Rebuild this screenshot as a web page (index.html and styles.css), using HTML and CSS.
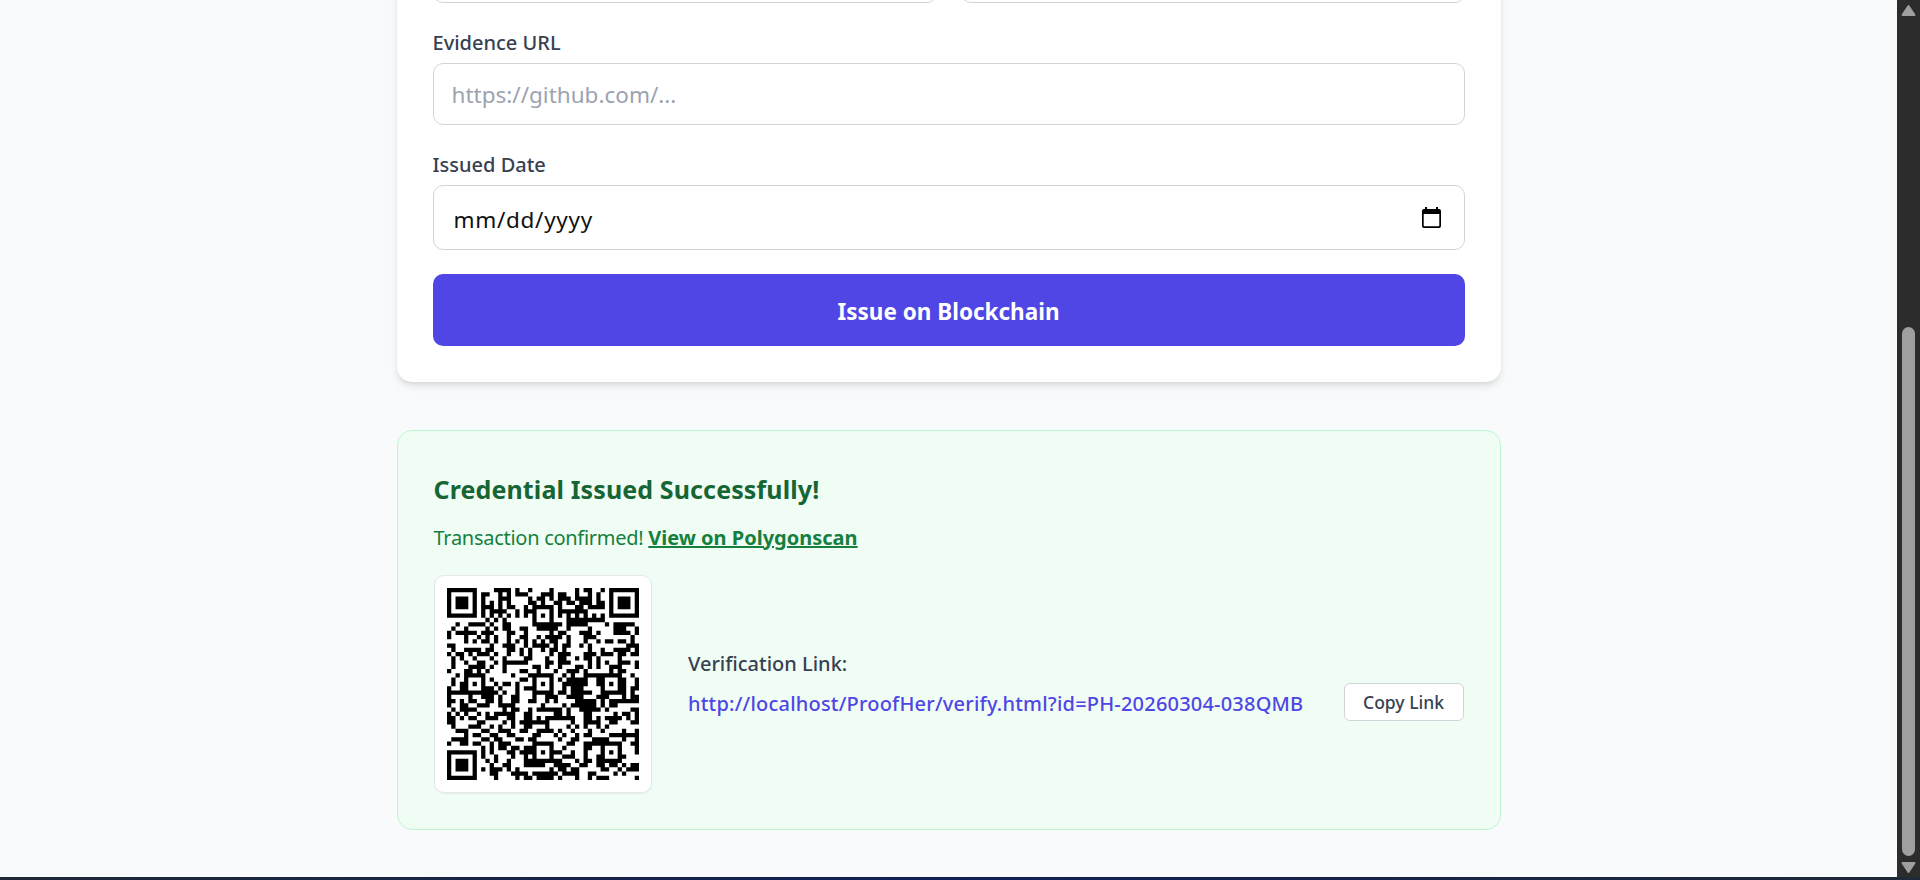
FILE: index.html
```html
<!DOCTYPE html>
<html lang="en">
<head>
  <meta charset="UTF-8">
  <title>ProofHer - Issue Credential</title>
  <link rel="stylesheet" href="styles.css">
</head>
<body>
  <div class="window">
    <div class="viewport">
      <div class="page">
        <main class="content">
          <form class="card">
            <div class="field-row">
              <input class="input" type="text">
              <input class="input" type="text">
            </div>
            <div class="field">
              <label class="label">Evidence URL</label>
              <input class="input" type="text" placeholder="https://github.com/...">
            </div>
            <div class="field">
              <label class="label">Issued Date</label>
              <div class="input date-input">
                <span class="date-text">mm/dd/yyyy</span>
                <svg class="cal-icon" viewBox="0 0 19 21">
                  <rect x="3" y="0" width="2" height="3"/>
                  <rect x="14" y="0" width="2" height="3"/>
                  <path fill-rule="evenodd" d="M2 2h15a2 2 0 0 1 2 2v15a2 2 0 0 1-2 2H2a2 2 0 0 1-2-2V4a2 2 0 0 1 2-2zm-.3 5v11.6c0 .4.3.7.7.7h14.2c.4 0 .7-.3.7-.7V7z"/>
                </svg>
              </div>
            </div>
            <button class="btn-primary" type="button">Issue on Blockchain</button>
          </form>

          <section class="success">
            <h3 class="success-title">Credential Issued Successfully!</h3>
            <p class="success-text">Transaction confirmed! <a href="#">View on Polygonscan</a></p>
            <div class="share-row">
              <div class="qr-box"><svg id="qr" class="qr"></svg></div>
              <div class="link-info">
                <div class="link-label">Verification Link:</div>
                <div class="link-row">
                  <a class="verify-link" href="#">http://localhost/ProofHer/verify.html?id=PH-20260304-038QMB</a>
                  <button class="btn-copy" type="button">Copy Link</button>
                </div>
              </div>
            </div>
          </section>
        </main>
      </div>
      <div class="scrollbar">
        <svg class="arrow" viewBox="0 0 23 17"><path d="M11.5 6 L17.5 15 H5.5 Z"/></svg>
        <div class="track"><div class="thumb"></div></div>
        <svg class="arrow" viewBox="0 0 23 21"><path d="M5.5 7 H17.5 L11.5 16 Z"/></svg>
      </div>
    </div>
    <div class="footer-strip"></div>
  </div>
  <script src="qr.js"></script>
</body>
</html>
```

FILE: styles.css
```css
* { box-sizing: border-box; }
html, body {
  margin: 0;
  height: 100%;
  overflow: hidden;
}
body {
  font-family: "Noto Sans", "Open Sans", Arial, sans-serif;
  background-color: #f9fafb;
  color: #374151;
}
.window {
  display: flex;
  flex-direction: column;
  height: 880px;
}
.viewport {
  flex: 1;
  display: flex;
  min-height: 0;
}
.page {
  flex: 1;
  overflow: hidden;
}
.content {
  width: 1104px;
  margin: 0 auto;
}
.card {
  /* page is scrolled, top of the form is out of view */
  margin-top: -100px;
  padding: 36px;
  background: #fff;
  border-radius: 15px;
  box-shadow: 0 5px 8px -1px rgba(0,0,0,.1), 0 2px 5px -2px rgba(0,0,0,.1);
}
.field-row {
  display: grid;
  grid-template-columns: 1fr 1fr;
  gap: 24px;
}
.field-row .input { height: 67px; }
.field {
  margin-top: 25px;
  display: flex;
  flex-direction: column;
}
.label {
  font-size: 20px;
  font-weight: 500;
  line-height: 30px;
  margin-bottom: 5px;
  color: #374151;
}
.input {
  display: block;
  width: 100%;
  height: 62px;
  padding: 0 18px;
  font: inherit;
  font-size: 22.5px;
  border: 1.25px solid #d1d5db;
  border-radius: 10px;
  background: #fff;
  color: #111;
}
.input::placeholder { color: #9ca3af; opacity: 1; }
.date-input {
  height: 65px;
  display: flex;
  align-items: center;
  justify-content: space-between;
  padding: 0 23px 0 20px;
  letter-spacing: .7px;
}
.date-text { padding-top: 3px; }
.cal-icon {
  width: 19px;
  height: 21px;
  fill: #000;
}
.btn-primary {
  display: block;
  width: 100%;
  height: 72px;
  margin-top: 24px;
  padding: 2px 0 0;
  border: 0;
  border-radius: 10px;
  background: #4f46e5;
  color: #fff;
  font: inherit;
  font-size: 22.5px;
  font-weight: 700;
}
.success {
  margin-top: 48px;
  height: 400px;
  padding: 36px;
  background: #f0fdf4;
  border: 1.25px solid #bbf7d0;
  border-radius: 15px;
}
.success-title {
  margin: 4px 0 0;
  font-size: 25px;
  font-weight: 700;
  line-height: 37.5px;
  letter-spacing: .12px;
  color: #166534;
}
.success-text {
  margin: 14px 0 0;
  font-size: 20px;
  line-height: 30px;
  letter-spacing: -.28px;
  color: #15803d;
}
.success-text a {
  color: #15803d;
  font-weight: 700;
  letter-spacing: 0;
}
.share-row {
  display: flex;
  align-items: center;
  margin-top: 22.5px;
}
.qr-box {
  flex: none;
  width: 218px;
  height: 218px;
  padding: 12px;
  background: #fff;
  border: 1.25px solid #e5e7eb;
  border-radius: 10px;
  box-shadow: 0 1px 2px rgba(0,0,0,.05);
}
.qr {
  display: block;
  width: 192px;
  height: 192px;
}
.link-info {
  flex: 1;
  margin-left: 36.5px;
  padding-top: 2px;
}
.link-label {
  font-size: 20px;
  font-weight: 500;
  line-height: 30px;
  margin-bottom: 4px;
  color: #374151;
}
.link-row {
  display: flex;
  align-items: center;
  justify-content: space-between;
}
.verify-link {
  padding-top: 4px;
  font-size: 20px;
  font-weight: 500;
  line-height: 30px;
  letter-spacing: .2px;
  color: #4f46e5;
  text-decoration: none;
}
.btn-copy {
  flex: none;
  width: 120px;
  height: 38px;
  padding: 0;
  border: 1.25px solid #d1d5db;
  border-radius: 6px;
  background: #fff;
  color: #374151;
  font: inherit;
  font-size: 17.5px;
  font-weight: 500;
}
.footer-strip {
  flex: none;
  height: 3px;
  background: linear-gradient(90deg, #1f2937, #111f55 50%, #1f2937);
}
.scrollbar {
  flex: none;
  width: 23px;
  display: flex;
  flex-direction: column;
  background: #2c2c2c;
}
.arrow {
  flex: none;
  width: 23px;
  fill: #9f9f9f;
  stroke: #9f9f9f;
  stroke-width: 2;
  stroke-linejoin: round;
}
.track {
  flex: 1;
  padding: 310px 5px 0;
}
.thumb {
  width: 13px;
  height: 100%;
  background: #9f9f9f;
  border-radius: 6.5px;
}
```

FILE: qr.js
```js
// small QR encoder: version 7, level H, byte mode, mask 1
const QR_TEXT = "http://localhost/ProofHer/verify.html?id=PH-20260304-038QMB";
const SIZE = 45;
const MASK = 1;
const VERSION_BITS = 0x07c94;
const BLOCKS = [13, 13, 13, 13, 14];
const EC_LEN = 26;
const ALIGN = [6, 22, 38];

// GF(256) tables
const EXP = new Array(512);
const LOG = new Array(256);
(function () {
  let x = 1;
  for (let i = 0; i < 255; i++) {
    EXP[i] = x;
    LOG[x] = i;
    x <<= 1;
    if (x & 256) x ^= 0x11d;
  }
  for (let i = 255; i < 512; i++) EXP[i] = EXP[i - 255];
})();

function rsGenerator(n) {
  let poly = [1];
  for (let i = 0; i < n; i++) {
    const next = new Array(poly.length + 1).fill(0);
    poly.forEach((c, j) => {
      next[j] ^= c;
      next[j + 1] ^= EXP[LOG[c] + i];
    });
    poly = next;
  }
  return poly;
}

function rsEncode(data, n) {
  const gen = rsGenerator(n);
  const res = data.concat(new Array(n).fill(0));
  for (let i = 0; i < data.length; i++) {
    const c = res[i];
    if (c === 0) continue;
    for (let j = 0; j < gen.length; j++) {
      if (gen[j]) res[i + j] ^= EXP[LOG[gen[j]] + LOG[c]];
    }
  }
  return res.slice(data.length);
}

function buildCodewords(text) {
  const bits = [];
  const push = (val, len) => {
    for (let i = len - 1; i >= 0; i--) bits.push((val >> i) & 1);
  };
  push(4, 4);
  push(text.length, 8);
  for (let i = 0; i < text.length; i++) push(text.charCodeAt(i), 8);
  push(0, 4);
  while (bits.length % 8) bits.push(0);

  const total = BLOCKS.reduce((a, b) => a + b, 0);
  const bytes = [];
  for (let i = 0; i < bits.length; i += 8) {
    bytes.push(parseInt(bits.slice(i, i + 8).join(""), 2));
  }
  for (let pad = 0xec; bytes.length < total; pad = pad === 0xec ? 0x11 : 0xec) bytes.push(pad);

  // split into blocks and interleave
  let pos = 0;
  const dataBlocks = BLOCKS.map((len) => {
    const b = bytes.slice(pos, pos + len);
    pos += len;
    return b;
  });
  const ecBlocks = dataBlocks.map((b) => rsEncode(b, EC_LEN));
  const out = [];
  for (let i = 0; i < 14; i++) {
    dataBlocks.forEach((b) => { if (i < b.length) out.push(b[i]); });
  }
  for (let i = 0; i < EC_LEN; i++) {
    ecBlocks.forEach((b) => out.push(b[i]));
  }
  return out;
}

function placeFunctionPatterns(m) {
  const finder = (r, c) => {
    for (let y = -1; y <= 7; y++) {
      for (let x = -1; x <= 7; x++) {
        if (r + y < 0 || r + y >= SIZE || c + x < 0 || c + x >= SIZE) continue;
        const inRing = x >= 0 && x <= 6 && (y === 0 || y === 6);
        const inSide = y >= 0 && y <= 6 && (x === 0 || x === 6);
        const inCore = x >= 2 && x <= 4 && y >= 2 && y <= 4;
        m[r + y][c + x] = inRing || inSide || inCore;
      }
    }
  };
  finder(0, 0);
  finder(0, SIZE - 7);
  finder(SIZE - 7, 0);

  ALIGN.forEach((r) => ALIGN.forEach((c) => {
    if (m[r][c] !== null) return;
    for (let y = -2; y <= 2; y++) {
      for (let x = -2; x <= 2; x++) {
        m[r + y][c + x] = Math.max(Math.abs(x), Math.abs(y)) !== 1;
      }
    }
  }));

  for (let i = 8; i < SIZE - 8; i++) {
    if (m[6][i] === null) m[6][i] = i % 2 === 0;
    if (m[i][6] === null) m[i][6] = i % 2 === 0;
  }

  // version info
  for (let i = 0; i < 18; i++) {
    const bit = ((VERSION_BITS >> i) & 1) === 1;
    const a = Math.floor(i / 3);
    const b = i % 3 + SIZE - 11;
    m[a][b] = bit;
    m[b][a] = bit;
  }
}

function placeFormat(m, mask) {
  // level H = 0b10
  const data = (2 << 3) | mask;
  let rem = data << 10;
  for (let i = 14; i >= 10; i--) {
    if ((rem >> i) & 1) rem ^= 0x537 << (i - 10);
  }
  const bits = ((data << 10) | rem) ^ 0x5412;
  const get = (i) => ((bits >> i) & 1) === 1;
  for (let i = 0; i <= 5; i++) m[i][8] = get(i);
  m[7][8] = get(6);
  m[8][8] = get(7);
  m[8][7] = get(8);
  for (let i = 9; i < 15; i++) m[8][14 - i] = get(i);
  for (let i = 0; i < 8; i++) m[8][SIZE - 1 - i] = get(i);
  for (let i = 8; i < 15; i++) m[SIZE - 15 + i][8] = get(i);
  m[SIZE - 8][8] = true;
}

function build(codewords) {
  const m = Array.from({ length: SIZE }, () => new Array(SIZE).fill(null));
  placeFunctionPatterns(m);
  placeFormat(m, MASK);
  const bits = [];
  codewords.forEach((w) => {
    for (let i = 7; i >= 0; i--) bits.push((w >> i) & 1);
  });
  let idx = 0;
  let up = true;
  for (let right = SIZE - 1; right > 0; right -= 2) {
    if (right === 6) right = 5;
    for (let k = 0; k < SIZE; k++) {
      const r = up ? SIZE - 1 - k : k;
      for (let c = right; c >= right - 1; c--) {
        if (m[r][c] !== null) continue;
        const bit = idx < bits.length ? bits[idx] === 1 : false;
        idx++;
        m[r][c] = r % 2 === 0 ? !bit : bit;
      }
    }
    up = !up;
  }
  return m;
}

function drawQr() {
  const svg = document.getElementById("qr");
  svg.setAttribute("viewBox", `0 0 ${SIZE} ${SIZE}`);
  let d = "";
  build(buildCodewords(QR_TEXT)).forEach((row, r) => row.forEach((on, c) => {
    if (on) d += `M${c} ${r}h1v1h-1z`;
  }));
  const path = document.createElementNS("http://www.w3.org/2000/svg", "path");
  path.setAttribute("d", d);
  svg.appendChild(path);
}

drawQr();
```
